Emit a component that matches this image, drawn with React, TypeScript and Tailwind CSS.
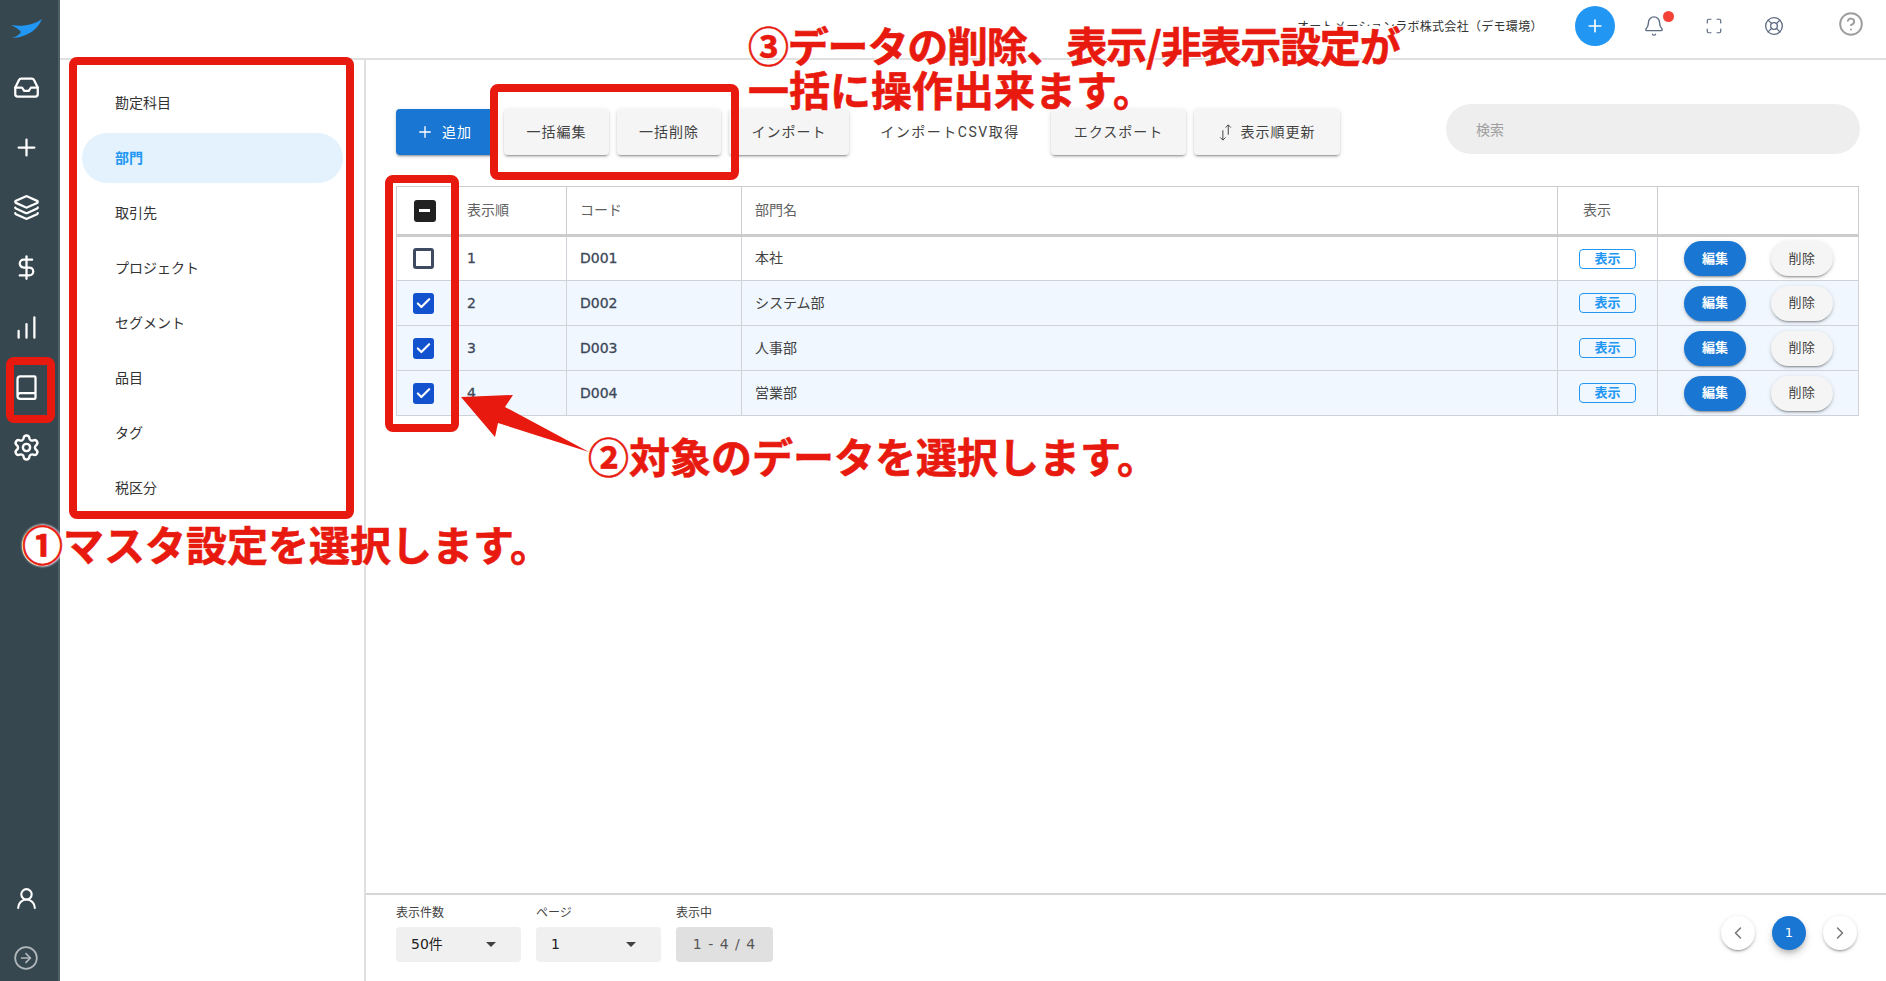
import React from 'react';
import {
  Inbox,
  Plus,
  Layers,
  DollarSign,
  ChartNoAxesColumnIncreasing,
  Book,
  Settings,
  UserRound,
  CircleArrowRight,
  Bell,
  Maximize,
  LifeBuoy,
  CircleHelp,
  Check,
  ChevronLeft,
  ChevronRight,
} from 'lucide-react';

const raised = 'shadow-[0_3px_1px_-2px_rgba(0,0,0,.2),0_2px_2px_0_rgba(0,0,0,.14),0_1px_5px_0_rgba(0,0,0,.12)]';
const dejavu = "font-['DejaVu_Sans','Noto_Sans_CJK_JP',sans-serif]";
const annotation = "absolute whitespace-nowrap font-['Noto_Sans_CJK_JP',sans-serif] text-[41px] leading-none font-bold text-[#e8190e] [-webkit-text-stroke:0.6px_#e8190e] [text-shadow:0_0_2px_#fff,0_0_3px_#fff,0_0_3px_#fff]";
const redBox = 'absolute rounded-lg border-[8px] border-[#e8190e] pointer-events-none';

const railTop = [Inbox, Plus, Layers, DollarSign, ChartNoAxesColumnIncreasing, Book, Settings];

const menuItems = ['勘定科目', '部門', '取引先', 'プロジェクト', 'セグメント', '品目', 'タグ', '税区分'];

const rows = [
  { order: 1, code: 'D001', name: '本社', checked: false },
  { order: 2, code: 'D002', name: 'システム部', checked: true },
  { order: 3, code: 'D003', name: '人事部', checked: true },
  { order: 4, code: 'D004', name: '営業部', checked: true },
];

const Caret = () => (
  <svg width="10" height="5" viewBox="0 0 10 5" className="fill-[#424242]">
    <polygon points="0,0 10,0 5,5" />
  </svg>
);

const Rail = () => (
  <aside className="flex h-full w-[60px] shrink-0 flex-col border-r-2 border-[#4f5f67] bg-[#37474f] pr-[6px] text-white">
    <div className="flex h-[57px] items-center justify-center">
      <svg width="34" height="24" viewBox="9 15 34 24" className="fill-[#2196f3]">
        <path d="M11 23 C 22 25 34 23 42 17 C 38 26 32 31 23 34 C 20 35 16 36 12 36 C 16 35 19 33 21 30 C 19 27 15 25 11 23 Z" />
      </svg>
    </div>
    {railTop.map((Icon, i) => (
      <div key={i} className="flex h-[60px] items-center justify-center">
        <Icon size={Icon === Settings ? 29 : 27} strokeWidth={2} />
      </div>
    ))}
    <div className="mt-auto flex h-[60px] items-center justify-center">
      <UserRound size={25} strokeWidth={2} />
    </div>
    <div className="flex h-[53px] items-start justify-center pt-[17px] text-[#b0b8bc]">
      <CircleArrowRight size={26} strokeWidth={1.6} />
    </div>
  </aside>
);

const TopBar = () => (
  <header className="flex h-[60px] shrink-0 items-center border-b-2 border-[#e0e0e0] bg-white">
    <span className="ml-[1237px] w-[250px] -translate-y-[2px] text-[12px] tracking-[0.3px] whitespace-nowrap text-[#333]">
      オートメーションラボ株式会社（デモ環境）
    </span>
    <button className="ml-[28px] flex h-10 w-10 -translate-y-[3px] items-center justify-center rounded-full bg-[#2196f3] text-white">
      <Plus size={20} strokeWidth={2} />
    </button>
    <div className="relative ml-[28px] -translate-y-[3px] text-[#5d6b82]">
      <Bell size={22} strokeWidth={1.5} />
      <span className="absolute -top-[4px] left-[20px] h-[11px] w-[11px] rounded-full bg-[#f44336]" />
    </div>
    <Maximize size={18} strokeWidth={1.6} className="ml-[40px] -translate-y-[3px] text-[#5d6b82]" />
    <LifeBuoy size={20} strokeWidth={1.6} className="ml-[41px] -translate-y-[3px] text-[#5d6b82]" />
    <CircleHelp size={26} strokeWidth={1.8} className="ml-[54px] -translate-y-[5px] text-[#9e9e9e]" />
  </header>
);

const SideMenu = () => (
  <nav className="w-[306px] shrink-0 border-r-2 border-[#e0e0e0] bg-white pt-[18px] pl-[22px]">
    <ul className="flex w-[261px] flex-col gap-[5px]">
      {menuItems.map((item) => (
        <li
          key={item}
          className={`flex h-[50px] items-center rounded-full pl-[33px] text-[14px] ${
            item === '部門' ? 'bg-[#e3f2fd] font-bold text-[#2196f3]' : 'text-[#333]'
          }`}
        >
          {item}
        </li>
      ))}
    </ul>
  </nav>
);

const ToolButton = ({ children, width, flat }: { children: React.ReactNode; width: string; flat?: boolean }) => (
  <button
    className={`flex h-[46px] items-center justify-center gap-[8px] rounded text-[14px] tracking-[1px] whitespace-nowrap text-[#424242] ${width} ${
      flat ? '' : `bg-[#f5f5f5] ${raised}`
    }`}
  >
    {children}
  </button>
);

const Toolbar = () => (
  <div className="flex items-start justify-between">
    <div className="mt-[5px] flex gap-[8px]">
      <button className={`flex h-[46px] w-[100px] items-center gap-2 rounded bg-[#1976d2] pl-5 text-[14px] tracking-[1px] whitespace-nowrap text-white ${raised}`}>
        <Plus size={18} strokeWidth={1.8} />
        追加
      </button>
      <ToolButton width="w-[105px]">一括編集</ToolButton>
      <ToolButton width="w-[104px]">一括削除</ToolButton>
      <ToolButton width="w-[120px]">インポート</ToolButton>
      <ToolButton width="w-[186px]" flat>
        <span className="tracking-[1.5px]">インポートCSV取得</span>
      </ToolButton>
      <ToolButton width="w-[135px]">エクスポート</ToolButton>
      <ToolButton width="w-[146px]">
        <svg width="14" height="17" viewBox="0 0 15 19" fill="none" stroke="currentColor" strokeWidth="1.1">
          <path d="M4 7v11M1 15l3 3 3-3" />
          <path d="M10 1v11M7 4l3-3 3 3" />
        </svg>
        表示順更新
      </ToolButton>
    </div>
    <input
      placeholder="検索"
      className="h-[50px] w-[414px] rounded-full bg-[#eeeeee] pt-[2px] pl-[30px] text-[14px] outline-none placeholder:text-[#9e9e9e]"
    />
  </div>
);

const RowCheck = ({ checked }: { checked: boolean }) =>
  checked ? (
    <span className="flex h-[21px] w-[21px] items-center justify-center rounded-[3px] bg-[#1252cf] text-white">
      <Check size={17} strokeWidth={3} />
    </span>
  ) : (
    <span className="block h-[21px] w-[21px] rounded-[3px] border-[3px] border-[#3d4a60] bg-white" />
  );

const DataTable = () => (
  <table className="mt-[31px] w-[1463px] table-fixed border-collapse text-[14px]">
    <colgroup>
      <col className="w-[56px]" />
      <col className="w-[114px]" />
      <col className="w-[175px]" />
      <col />
      <col className="w-[100px]" />
      <col className="w-[201px]" />
    </colgroup>
    <thead>
      <tr className="h-[49px] border-b-[3px] border-[#cccccc] text-left font-normal text-[#616161]">
        <th className="border border-b-[3px] border-[#cccccc]">
          <span className="mx-auto flex h-[22px] w-[22px] items-center justify-center rounded-[3px] bg-[#212121]">
            <span className="h-[3px] w-[11px] bg-white" />
          </span>
        </th>
        <th className="border border-b-[3px] border-[#cccccc] pl-[14px] font-normal">表示順</th>
        <th className="border border-b-[3px] border-[#cccccc] pl-[13px] font-normal">コード</th>
        <th className="border border-b-[3px] border-[#cccccc] pl-[13px] font-normal">部門名</th>
        <th className="border border-b-[3px] border-[#cccccc] pl-[25px] font-normal">表示</th>
        <th className="border border-b-[3px] border-[#cccccc]" />
      </tr>
    </thead>
    <tbody>
      {rows.map((row) => (
        <tr key={row.code} className={`h-[45px] ${row.checked ? 'bg-[#f0f7ff]' : 'bg-white'}`}>
          <td className="border border-[#cfd2d8] pr-[2px]">
            <div className="flex justify-center">
              <RowCheck checked={row.checked} />
            </div>
          </td>
          <td className={`border border-[#cfd2d8] pl-[14px] text-[#3c4858] ${dejavu} [-webkit-text-stroke:0.3px]`}>{row.order}</td>
          <td className={`border border-[#cfd2d8] pl-[13px] text-[#3c4858] ${dejavu} [-webkit-text-stroke:0.3px]`}>{row.code}</td>
          <td className="border border-[#cfd2d8] pl-[13px] text-[#424242]">{row.name}</td>
          <td className="border border-[#cfd2d8]">
            <span className="mx-auto flex h-[20px] w-[57px] items-center justify-center rounded border border-[#2196f3] text-[13px] font-bold text-[#2196f3]">
              表示
            </span>
          </td>
          <td className="border border-[#cfd2d8] pl-[26px]">
            <div className="flex gap-[25px]">
              <button className={`h-[35px] w-[62px] rounded-full bg-[#1976d2] text-[13px] font-bold text-white ${raised}`}>編集</button>
              <button className={`h-[35px] w-[62px] rounded-full bg-[#f5f5f5] text-[13px] tracking-[0.5px] text-[#424242] ${raised}`}>削除</button>
            </div>
          </td>
        </tr>
      ))}
    </tbody>
  </table>
);

const Footer = () => (
  <footer className="flex h-[88px] shrink-0 justify-between border-t-2 border-[#d6d6d6] pt-[10px] pr-[29px] pl-[30px]">
    <div className="flex gap-[15px]">
      <div>
        <div className="h-4 text-[12px] leading-4 text-[#424242]">表示件数</div>
        <div className={`mt-[6px] flex h-[35px] w-[125px] items-center justify-between rounded bg-[#f0f0f0] pr-[25px] pl-[15px] text-[14px] text-[#212121] ${dejavu}`}>
          50件
          <Caret />
        </div>
      </div>
      <div>
        <div className="h-4 text-[12px] leading-4 text-[#424242]">ページ</div>
        <div className={`mt-[6px] flex h-[35px] w-[125px] items-center justify-between rounded bg-[#f0f0f0] pr-[25px] pl-[15px] text-[14px] text-[#212121] ${dejavu}`}>
          1
          <Caret />
        </div>
      </div>
      <div>
        <div className="h-4 text-[12px] leading-4 text-[#424242]">表示中</div>
        <div className={`mt-[6px] flex h-[35px] w-[97px] items-center justify-center rounded bg-[#e0e0e0] text-[14px] tracking-[1px] text-[#555] ${dejavu}`}>
          1 - 4 / 4
        </div>
      </div>
    </div>
    <div className="mt-[11px] flex h-[34px] items-center gap-[17px]">
      <button className={`flex h-[34px] w-[34px] items-center justify-center rounded-full bg-white text-[#757575] ${raised}`}>
        <ChevronLeft size={20} strokeWidth={1.8} />
      </button>
      <button className={`h-[34px] w-[34px] rounded-full bg-[#1976d2] text-[13px] text-white shadow-[0_3px_5px_-1px_rgba(0,0,0,.2),0_5px_8px_0_rgba(0,0,0,.14)] ${dejavu}`}>
        1
      </button>
      <button className={`flex h-[34px] w-[34px] items-center justify-center rounded-full bg-white text-[#757575] ${raised}`}>
        <ChevronRight size={20} strokeWidth={1.8} />
      </button>
    </div>
  </footer>
);

const Annotations = () => (
  <>
    <div className={`${redBox} top-[57px] left-[69px] h-[462px] w-[285px]`} />
    <div className={`${redBox} top-[84px] left-[490px] h-[96px] w-[249px]`} />
    <div className={`${redBox} top-[175px] left-[385px] h-[257px] w-[74px]`} />
    <div className={`${redBox} top-[357px] left-[6px] h-[66px] w-[49px]`} />
    <svg className="pointer-events-none absolute top-0 left-0 h-[981px] w-[1886px]" viewBox="0 0 1886 981">
      <polygon points="461,397 513,395 505,407 589,452 498,423 495,437" fill="#e8190e" />
    </svg>
    <div className="absolute top-[26px] left-[1292px] h-[9px] w-[108px] bg-white" />
    <div className="absolute top-[526px] left-[22px] h-[40px] w-[40px] rounded-full bg-white" />
    <div className={`${annotation} top-[523px] left-[22px]`}>①マスタ設定を選択します。</div>
    <div className={`${annotation} top-[24px] left-[748px] tracking-[-1.2px]`}>③データの削除、表示/非表示設定が</div>
    <div className={`${annotation} top-[68px] left-[748px]`}>一括に操作出来ます。</div>
    <div className={`${annotation} top-[435px] left-[588px]`}>②対象のデータを選択します。</div>
  </>
);

export default function App() {
  return (
    <div className="relative flex h-[981px] w-full overflow-hidden bg-white font-['Roboto','Noto_Sans_CJK_JP',sans-serif] text-[#333]">
      <Rail />
      <div className="flex min-w-0 flex-1 flex-col">
        <TopBar />
        <div className="flex min-h-0 flex-1">
          <SideMenu />
          <main className="flex min-w-0 flex-1 flex-col">
            <div className="flex-1 pt-[44px] pr-[26px] pl-[30px]">
              <Toolbar />
              <DataTable />
            </div>
            <Footer />
          </main>
        </div>
      </div>
      <Annotations />
    </div>
  );
}
